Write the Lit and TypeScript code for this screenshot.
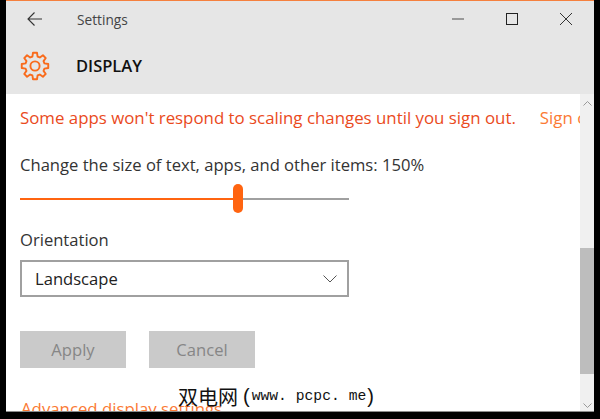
import { css, html, LitElement, svg } from 'lit';
import { customElement, state } from 'lit/decorators.js';

// 8 tooth outline, tooth on top
function gearPath(cx: number, cy: number, outer: number, inner: number) {
  const pts: string[] = [];
  const teeth = 8;
  const step = (Math.PI * 2) / teeth;
  for (let i = 0; i < teeth; i++) {
    const a = -Math.PI / 2 + i * step;
    const polar = (r: number, da: number) =>
      `${(cx + r * Math.cos(a + da)).toFixed(2)} ${(cy + r * Math.sin(a + da)).toFixed(2)}`;
    pts.push(`${i === 0 ? 'M' : 'L'}${polar(inner, -0.27)}`);
    pts.push(`L${polar(outer, -0.15)}`);
    pts.push(`L${polar(outer, 0.15)}`);
    pts.push(`L${polar(inner, 0.27)}`);
  }
  return pts.join(' ') + ' Z';
}

@customElement('app-root')
export class AppRoot extends LitElement {
  static override styles = css`
    :host {
      display: block;
      width: 600px;
      height: 419px;
      background: #000;
      font-family: 'Open Sans', 'Noto Sans', sans-serif;
      overflow: hidden;
      position: relative;
    }
    .window {
      display: flex;
      flex-direction: column;
      width: 588px;
      height: 412px;
      margin-left: 6px;
      border-top: 1px solid #f5803e;
      box-sizing: border-box;
      border-bottom: 1px solid #8c8c8c;
      background: #fff;
    }
    .head {
      height: 93px;
      flex: none;
      background: #e6e6e6;
      display: flex;
      flex-direction: column;
    }
    .titlebar {
      height: 36px;
      display: flex;
      align-items: center;
    }
    .back {
      margin-left: 21px;
      width: 15px;
      height: 14px;
    }
    .title {
      margin-left: 35px;
      font-size: 13.7px;
      color: #444;
    }
    .win-btns {
      margin-left: auto;
      margin-right: 22px;
      display: flex;
      gap: 42px;
    }
    .win-btns svg {
      width: 12px;
      height: 12px;
      display: block;
    }
    .heading {
      display: flex;
      align-items: center;
      height: 57px;
      padding-left: 14px;
    }
    .gear {
      width: 30px;
      height: 30px;
    }
    .heading h1 {
      margin: 0 0 0 26px;
      font-size: 16.5px;
      font-weight: 600;
      color: #111;
    }
    .body {
      flex: 1;
      min-height: 0;
      display: flex;
    }
    .content {
      flex: 1;
      min-width: 0;
      overflow: hidden;
      padding: 12px 0 0 14px;
      display: flex;
      flex-direction: column;
      align-items: flex-start;
      color: #333;
      font-size: 16.6px;
    }
    .content > * {
      flex: none;
    }
    .notice {
      display: flex;
      white-space: nowrap;
      font-size: 16.85px;
      line-height: 24px;
      color: #ea4a1c;
    }
    .notice a {
      margin-left: 24px;
      color: #fb7a34;
    }
    .size-label {
      margin-top: 23px;
      line-height: 24px;
    }
    .slider {
      position: relative;
      margin-top: 7px;
      width: 329px;
      height: 29px;
      display: flex;
      align-items: center;
    }
    .track {
      height: 2px;
      flex: 1;
      background: linear-gradient(to right, #ff6410 66%, #a0a0a0 66%);
    }
    .thumb {
      position: absolute;
      left: 213px;
      top: 0;
      width: 10px;
      height: 29px;
      border-radius: 5px;
      background: #ff6410;
    }
    .orient-label {
      margin-top: 15px;
      line-height: 24px;
    }
    .select {
      margin-top: 8px;
      box-sizing: border-box;
      width: 329px;
      height: 37px;
      border: 2px solid #a0a0a0;
      display: flex;
      align-items: center;
      justify-content: space-between;
      padding: 0 10px 0 13px;
      color: #222;
    }
    .select svg {
      width: 14px;
      height: 8px;
    }
    .actions {
      display: flex;
      gap: 23px;
      margin-top: 34px;
    }
    .actions button {
      width: 106px;
      height: 37px;
      border: 0;
      padding: 0;
      background: #cacaca;
      color: #868686;
      font: inherit;
    }
    .advanced {
      margin-top: 29px;
      margin-left: 1px;
      font-size: 16.8px;
      line-height: 24px;
      white-space: nowrap;
      color: #fb7a34;
    }
    .scrollbar {
      flex: none;
      width: 14px;
      background: #f0f0f0;
      display: flex;
      flex-direction: column;
      align-items: center;
    }
    .scrollbar svg {
      width: 9px;
      height: 5px;
      flex: none;
    }
    .scrollbar .up {
      margin-top: 7px;
    }
    .scrollbar .down {
      margin-top: 29px;
    }
    .scroll-thumb {
      width: 100%;
      height: 126px;
      margin-top: 142px;
      flex: none;
      background: #bdbdbd;
    }
    .watermark {
      position: absolute;
      left: 178px;
      top: 381px;
      display: flex;
      align-items: center;
      height: 30px;
      font-family: 'Noto Sans CJK SC', sans-serif;
      font-size: 20px;
      color: #111;
      white-space: nowrap;
    }
    .latin {
      font-family: 'Liberation Mono', monospace;
      font-size: 14.7px;
      white-space: pre;
    }
    .paren {
      font-family: 'Liberation Sans', sans-serif;
      font-size: 20px;
      margin: 0 2px 0 5px;
    }
    .paren.close {
      margin: 0 0 0 1px;
    }
  `;

  @state() private scale = 150;

  override render() {
    return html`
      <div class="window">
        <div class="head">
          <div class="titlebar">
            <svg class="back" viewBox="0 0 15 14" fill="none" stroke="#333" stroke-width="1.1">
              <path d="M15 7H1M7.5 .5L1 7l6.5 6.5" />
            </svg>
            <span class="title">Settings</span>
            <div class="win-btns">
              <svg viewBox="0 0 12 12"><path d="M0 6h12" stroke="#777" stroke-width="1.4" /></svg>
              <svg viewBox="0 0 12 12" fill="none"><rect x=".5" y=".5" width="11" height="11" stroke="#222" /></svg>
              <svg viewBox="0 0 12 12" fill="none"><path d="M0 0l12 12M12 0L0 12" stroke="#333" /></svg>
            </div>
          </div>
          <div class="heading">
            <svg class="gear" viewBox="0 0 30 30" fill="none" stroke="#f96b1c" stroke-width="1.9" stroke-linejoin="round">
              ${svg`<path d=${gearPath(15, 15, 13.4, 9.8)} />`}
              <circle cx="15" cy="15" r="4.6" />
            </svg>
            <h1>DISPLAY</h1>
          </div>
        </div>
        <div class="body">
          <div class="content">
            <div class="notice">
              <span>Some apps won't respond to scaling changes until you sign out.</span>
              <a>Sign out now</a>
            </div>
            <div class="size-label">Change the size of text, apps, and other items: ${this.scale}%</div>
            <div class="slider"><div class="track"></div><div class="thumb"></div></div>
            <div class="orient-label">Orientation</div>
            <div class="select">
              <span>Landscape</span>
              <svg viewBox="0 0 14 8" fill="none" stroke="#555"><path d="M.5 .5L7 7l6.5-6.5" /></svg>
            </div>
            <div class="actions">
              <button>Apply</button>
              <button>Cancel</button>
            </div>
            <div class="advanced">Advanced display settings</div>
          </div>
          <div class="scrollbar">
            <svg class="up" viewBox="0 0 9 5" fill="none" stroke="#999"><path d="M.5 4.5l4-4 4 4" /></svg>
            <div class="scroll-thumb"></div>
            <svg class="down" viewBox="0 0 9 5" fill="none" stroke="#999"><path d="M.5 .5l4 4 4-4" /></svg>
          </div>
        </div>
      </div>
      <div class="watermark">双电网<span class="paren">(</span><span class="latin">www. pcpc. me</span><span class="paren close">)</span></div>
    `;
  }
}
